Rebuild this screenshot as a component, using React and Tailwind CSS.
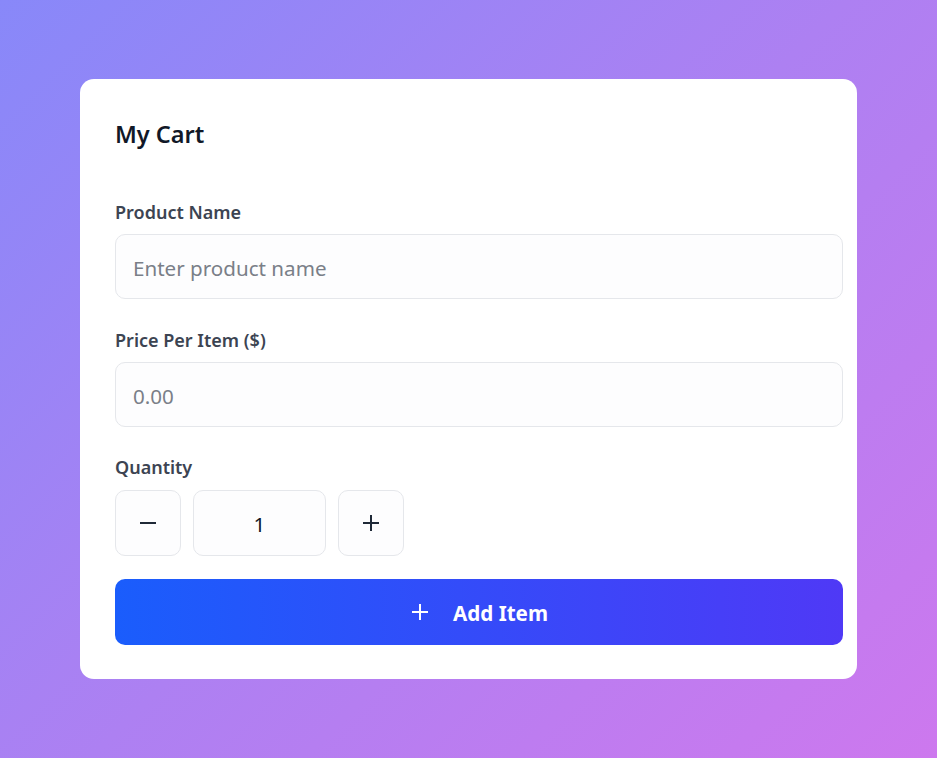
import React from "react";

function Line({ plus = false, color = "#1f2937", w = 2 }) {
  return (
    <svg width="16" height="16" viewBox="0 0 16 16" fill="none" stroke={color} strokeWidth={w} strokeLinecap="butt">
      <line x1="0" y1="8" x2="16" y2="8" />
      {plus && <line x1="8" y1="0" x2="8" y2="16" />}
    </svg>
  );
}

export default function App() {
  return (
    <div
      className="w-full h-[758px] flex items-center justify-center bg-[linear-gradient(135deg,#8888f9_0%,#ad80f2_50%,#cd78ee_100%)]"
      style={{ fontFamily: '"Noto Sans", "Open Sans", sans-serif' }}
    >
      <div className="w-[777px] bg-white rounded-[14px] pl-[35px] pt-[35px] pb-[34px]">
        <h1 className="h-10 leading-10 text-[23.5px] font-semibold text-[#111827] mb-[44px]">My Cart</h1>

        <label className="block h-6 leading-6 pt-[2px] text-[18px] font-semibold text-[#3c4452]">Product Name</label>
        <div className="mt-3 w-[728px] h-[65px] rounded-[10px] border border-[#e5e7eb] bg-[#fdfdfe] flex items-center pl-[17px] pt-[4px]">
          <span className="text-[20.6px] text-[#7a7f88]">Enter product name</span>
        </div>

        <label className="block mt-[27px] h-6 leading-6 pt-[2px] text-[18px] font-semibold text-[#3c4452]">Price Per Item ($)</label>
        <div className="mt-3 w-[728px] h-[65px] rounded-[10px] border border-[#e5e7eb] bg-[#fdfdfe] flex items-center pl-[17px] pt-[4px]">
          <span className="text-[20.6px] text-[#7a7f88]">0.00</span>
        </div>

        <label className="block mt-[26px] h-6 leading-6 pt-[2px] text-[18px] font-semibold text-[#3c4452]">Quantity</label>
        <div className="mt-[13px] flex gap-3">
          <div className="w-[66px] h-[66px] rounded-[10px] border border-[#e5e7eb] bg-[#fdfdfe] flex items-center justify-center">
            <Line />
          </div>
          <div className="w-[133px] h-[66px] rounded-[10px] border border-[#e5e7eb] bg-[#fdfdfe] flex items-center justify-center pt-[3px] text-[20.6px] text-[#111827]">
            1
          </div>
          <div className="w-[66px] h-[66px] rounded-[10px] border border-[#e5e7eb] bg-[#fdfdfe] flex items-center justify-center">
            <Line plus />
          </div>
        </div>

        <div className="mt-[23px] w-[728px] h-[66px] rounded-[10px] bg-[linear-gradient(90deg,#1a5dfc_0%,#4f39f6_100%)] flex items-center justify-center gap-[25px] pl-[2px]">
          <Line plus color="#ffffff" w={2} />
          <span className="pt-[3px] text-[20.6px] font-bold text-white">Add Item</span>
        </div>
      </div>
    </div>
  );
}
